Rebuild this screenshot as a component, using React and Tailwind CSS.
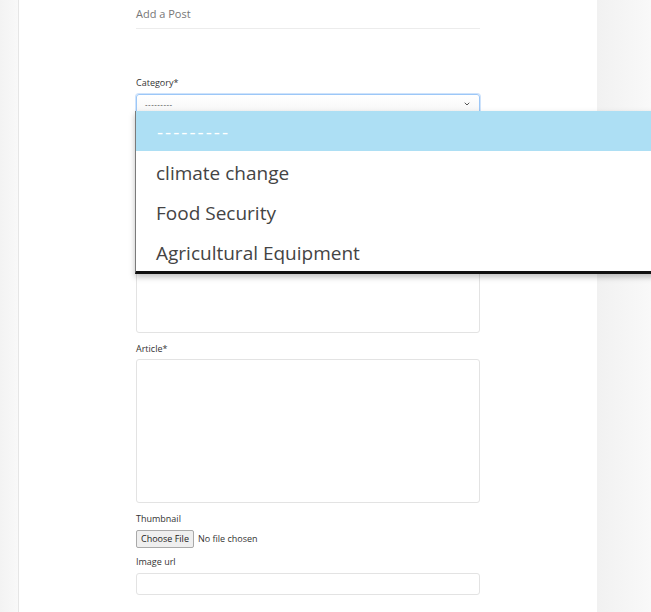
import { ChevronDown } from 'lucide-react';

const font = "font-['Open_Sans','Liberation_Sans',sans-serif]";

const Label = ({ children }) => (
  <div className="text-[9px] leading-[11px] text-[#333] mb-[6px]">{children}</div>
);

const App = () => {
  const options = ['climate change', 'Food Security', 'Agricultural Equipment'];

  return (
    <div className={`relative flex h-[612px] w-[651px] overflow-hidden bg-[#f5f5f5] ${font}`}>
      {/* left gutter */}
      <div className="w-[19px] shrink-0 bg-gradient-to-r from-[#f3f3f3] to-[#f9f9f9] border-r border-[#e6e6e6]" />

      {/* card */}
      <div className="w-[578px] shrink-0 bg-white pl-[117px]">
        <div className="w-[344px]">
          <div className="pt-[7px] pb-[7px] text-[11px] leading-[14px] text-[#777]">Add a Post</div>
          <div className="border-t border-[#ececec]" />

          <div className="mt-[48px]">
            <Label>Category*</Label>
            <div className="flex h-[20px] items-center justify-between rounded-[3px] border border-[#9cc7f7] bg-gradient-to-b from-white to-[#f6f6f6] px-[8px] shadow-[0_0_0_1px_#cfe3fb]">
              <span className="text-[8px] leading-none tracking-[0.5px] text-[#333]">---------</span>
              <ChevronDown className="h-[8px] w-[8px] text-[#555]" strokeWidth={3} />
            </div>
          </div>

          {/* summary field, its label sits under the open list */}
          <div className="mt-[31px]">
            <div className="h-[188px] rounded-[3px] border border-[#e3e3e3]" />
          </div>

          <div className="mt-[10px]">
            <div className="text-[9px] leading-[11px] text-[#333] mb-[5px]">Article*</div>
            <div className="h-[144px] rounded-[3px] border border-[#e3e3e3]" />
          </div>

          <div className="mt-[10px]">
            <Label>Thumbnail</Label>
            <div className="flex items-center gap-[4px]">
              <span className="rounded-[2px] border border-[#a9a9a9] bg-[#efefef] px-[4px] py-[2px] text-[9px] leading-[12px] text-[#222]">
                Choose File
              </span>
              <span className="text-[9px] text-[#333]">No file chosen</span>
            </div>
          </div>

          <div className="mt-[8px]">
            <Label>Image url</Label>
            <div className="h-[22px] rounded-[3px] border border-[#e3e3e3]" />
          </div>
        </div>
      </div>

      {/* right gutter */}
      <div className="flex-1 bg-gradient-to-r from-[#f1f1f1] to-[#f9f9f9]" />

      {/* open select list */}
      <div className="absolute left-[135px] top-[111px] w-[540px] border-l border-[#7a7a7a] border-b-[3px] border-b-[#111] bg-white shadow-[0_3px_6px_rgba(0,0,0,0.25)]">
        <div className="flex h-[40px] items-center bg-[#addff4] pl-[21px] pt-[2px] text-[19px] tracking-[2px] text-white">---------</div>
        {options.map((o) => (
          <div key={o} className="flex h-[40px] items-center pl-[20px] pt-[4px] text-[19px] text-[#444]">
            {o}
          </div>
        ))}
      </div>
    </div>
  );
};

export default App;
